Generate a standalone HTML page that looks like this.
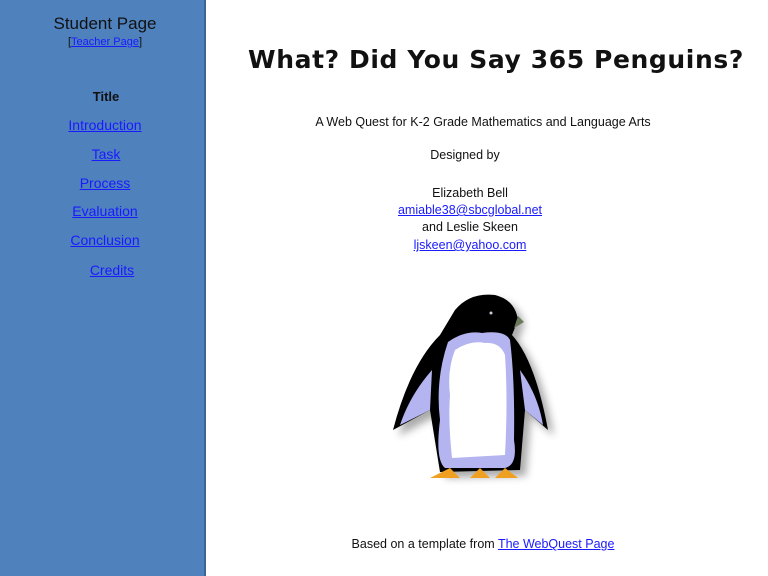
<!DOCTYPE html>
<html><head><meta charset="utf-8"><style>
body{margin:0;width:768px;height:576px;background:#fff;position:relative;overflow:hidden;font-family:"Liberation Sans",sans-serif;color:#111}
#side{position:absolute;left:0;top:0;width:206px;height:576px;background:#4f81bd;border-right:2px solid #3a6594;box-sizing:border-box}
.c{position:absolute;white-space:nowrap;transform:translateX(-50%)}
a{color:#1a1aff;text-decoration:underline}
.nav{font-size:14px;color:#2233dd}
.t{font-size:12.5px}
</style></head><body>
<div id="side"></div>
<div class="c" style="left:105px;top:14px;font-size:17px">Student Page</div>
<div class="c" style="left:105px;top:36px;font-size:11px">[<a>Teacher Page</a>]</div>
<div class="c" style="left:106px;top:89px;font-size:13px;font-weight:bold">Title</div>
<div class="c nav" style="left:105px;top:117px"><a>Introduction</a></div>
<div class="c nav" style="left:106px;top:146px"><a>Task</a></div>
<div class="c nav" style="left:105px;top:175px"><a>Process</a></div>
<div class="c nav" style="left:105px;top:203px"><a>Evaluation</a></div>
<div class="c nav" style="left:105px;top:232px"><a>Conclusion</a></div>
<div class="c nav" style="left:112px;top:262px"><a>Credits</a></div>

<div class="c" style="left:496px;top:45px;font-family:'DejaVu Sans',sans-serif;font-weight:bold;font-size:25px;letter-spacing:0.6px">What? Did You Say 365 Penguins?</div>
<div class="c t" style="left:483px;top:115px">A Web Quest for K-2 Grade Mathematics and Language Arts</div>
<div class="c t" style="left:465px;top:148px">Designed by</div>
<div class="c t" style="left:470px;top:186px">Elizabeth Bell</div>
<div class="c t" style="left:470px;top:203px"><a>amiable38@sbcglobal.net</a></div>
<div class="c t" style="left:470px;top:220px">and Leslie Skeen</div>
<div class="c t" style="left:470px;top:238px"><a>ljskeen@yahoo.com</a></div>
<div class="c t" style="left:483px;top:537px">Based on a template from <a>The WebQuest Page</a></div>

<svg style="position:absolute;left:380px;top:285px" width="190" height="200" viewBox="380 285 190 200">
<defs><filter id="sh"><feGaussianBlur stdDeviation="4"/></filter></defs>
<g transform="translate(6,6)" filter="url(#sh)" opacity="0.45">
<path d="M455 310 Q470 292 495 295 Q515 300 518 320 L512 335 Q535 360 548 430 L525 410 L520 470 L440 472 L430 410 L393 430 Q410 365 440 335 Z" fill="#444"/>
</g>
<path d="M455 310 Q470 292 495 295 Q515 300 518 320 L512 335 Q535 360 548 430 L525 410 L520 470 L440 472 L430 410 L393 430 Q410 365 440 335 Z" fill="#000"/>
<path d="M518 316 L524 322 L514 328 Z" fill="#6b7a5a"/>
<circle cx="491" cy="313" r="1.5" fill="#ccd"/>
<path d="M448 342 Q465 330 482 333 Q505 330 510 340 Q515 380 514 440 Q518 465 505 468 L445 468 Q435 460 440 420 Q435 380 448 342 Z" fill="#b4b4f0"/>
<path d="M455 350 Q470 340 485 343 Q500 342 505 355 Q508 400 505 455 L452 458 Q448 420 450 395 Q447 370 455 350 Z" fill="#fff"/>
<path d="M432 370 Q410 395 400 425 L430 410 Z" fill="#b4b4f0"/>
<path d="M520 370 Q538 395 543 425 L525 410 Z" fill="#b4b4f0"/>
<path d="M430 478 L450 468 L460 478 Z M470 478 L480 468 L490 478 Z M495 478 L505 468 L518 478 Z" fill="#f0a020"/>
</svg>
</body></html>
